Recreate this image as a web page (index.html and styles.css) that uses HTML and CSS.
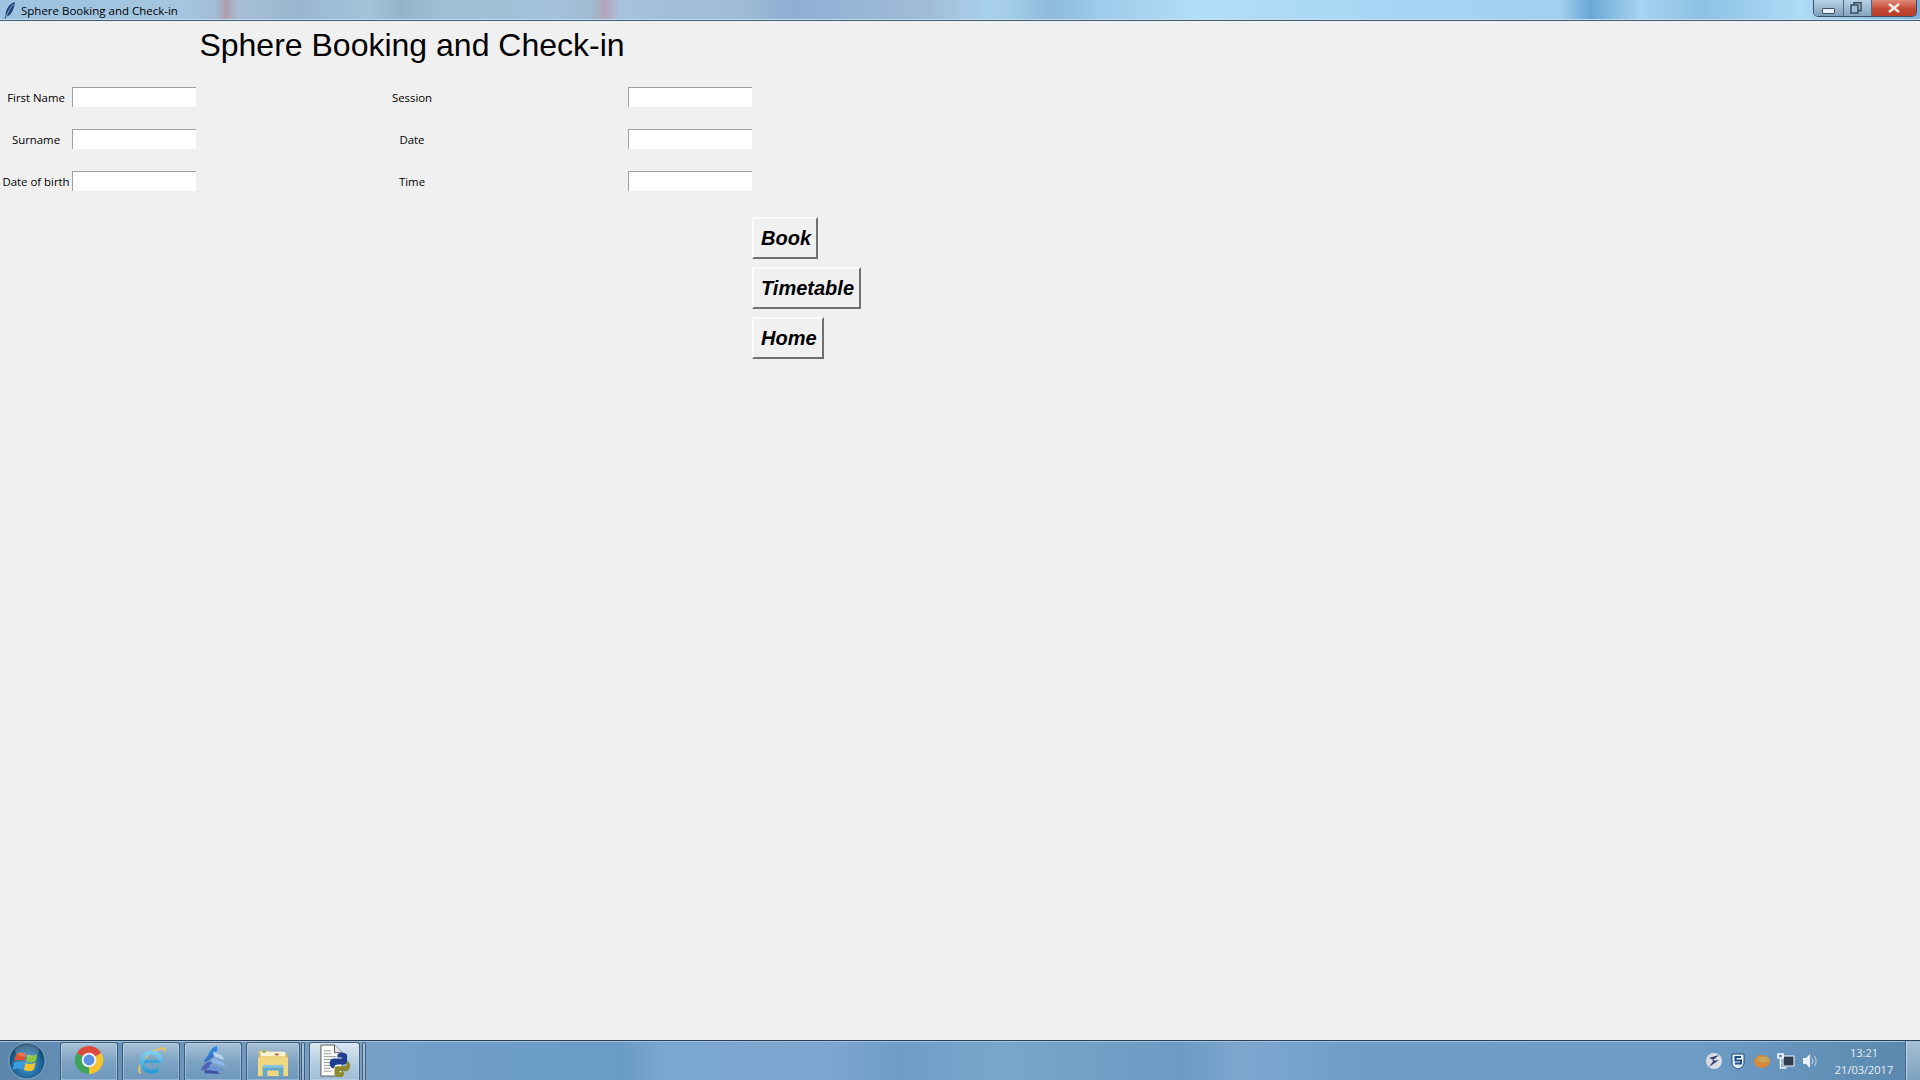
FILE: index.html
```html
<!DOCTYPE html>
<html lang="en">
<head>
<meta charset="utf-8">
<title>Sphere Booking and Check-in</title>
<link rel="stylesheet" href="styles.css">
</head>
<body>
<header class="titlebar">
  <div class="title-left">
    <svg class="feather" viewBox="0 0 14 20" width="14" height="20"><path d="M12 2C8 3 4 7 3 12c-.3 2-.5 3-.5 4l-1 2.500 1 .3 1-2.300c4-1 7-5 8.500-14.500z" fill="#1d3f77"/><path d="M10.500 4C7.500 7.500 5 12 3 17" stroke="#a9c6df" stroke-width=".8" fill="none"/></svg>
    <span class="title-text">Sphere Booking and Check-in</span>
  </div>
  <div class="winctl">
    <div class="wc wc-min"><span class="min-glyph"></span></div>
    <div class="wc wc-max"><svg viewBox="0 0 12 12" width="12" height="12"><rect x="4" y=".7" width="7" height="8" fill="none" stroke="#36465a" stroke-width="1.400"/><rect x="1" y="3" width="7" height="8" fill="#9fc0da" stroke="#36465a" stroke-width="1.400"/></svg></div>
    <div class="wc wc-close"><svg viewBox="0 0 14 10" width="14" height="10"><path d="M2 1l10 8M12 1L2 9" stroke="#f4e8e4" stroke-width="2.600"/></svg></div>
  </div>
</header>

<main class="app">
  <h1 class="heading">Sphere Booking and Check-in</h1>

  <label class="lbl col-a row-a">First Name</label>
  <input class="entry col-b row-a" type="text">
  <label class="lbl col-c row-a">Session</label>
  <input class="entry col-d row-a" type="text">

  <label class="lbl col-a row-b">Surname</label>
  <input class="entry col-b row-b" type="text">
  <label class="lbl col-c row-b">Date</label>
  <input class="entry col-d row-b" type="text">

  <label class="lbl col-a row-c">Date of birth</label>
  <input class="entry col-b row-c" type="text">
  <label class="lbl col-c row-c">Time</label>
  <input class="entry col-d row-c" type="text">

  <button class="tkbtn btn-1" type="button">Book</button>
  <button class="tkbtn btn-2" type="button">Timetable</button>
  <button class="tkbtn btn-3" type="button">Home</button>
</main>

<footer class="taskbar">
  <div class="start">
    <svg viewBox="0 0 40 40" width="40" height="40">
      <defs>
        <radialGradient id="orb" cx=".5" cy=".6" r=".6"><stop offset="0" stop-color="#4fa6d8"/><stop offset=".7" stop-color="#1b5f93"/><stop offset="1" stop-color="#10385c"/></radialGradient>
        <linearGradient id="iee" x1="0" y1="0" x2="0" y2="1"><stop offset="0" stop-color="#7fd0ee"/><stop offset="1" stop-color="#2f9ad6"/></linearGradient>
      </defs>
      <circle cx="20" cy="20" r="18" fill="url(#orb)" stroke="#c5d8e6" stroke-opacity=".55"/>
      <path d="M9 13c3-2 6-2 10 0l-1.500 7c-3-1.500-6-1.500-10 0z" fill="#e2532c"/>
      <path d="M20.500 13.500c3 1.500 6 1.500 10-.5l-1.500 7c-3 2-6 2-10 .5z" fill="#8cc63f"/>
      <path d="M7 21.500c3-1.500 6-1.500 10 0l-1.500 7c-3-1.500-6-1.500-10 .5z" fill="#3a9de0"/>
      <path d="M18.500 22c3 1.500 6 1.500 10-.5l-1.500 7c-3 2-6 2-10 .5z" fill="#f4c430"/>
      <ellipse cx="20" cy="9.500" rx="12" ry="6.500" fill="#fff" fill-opacity=".2"/>
    </svg>
  </div>

  <div class="tb tb-w58">
    <svg viewBox="0 0 32 32" width="30" height="30">
      <path d="M16 16L3 8.500A15 15 0 0 1 29 8.500z" fill="#dc4a3c"/>
      <path d="M16 16L29 8.500A15 15 0 0 1 16 31z" fill="#f6c32c"/>
      <path d="M16 16V31A15 15 0 0 1 3 8.500z" fill="#3fa45b"/>
      <circle cx="16" cy="16" r="7.800" fill="#f2f4f6"/>
      <circle cx="16" cy="16" r="5.800" fill="#5b8fe4"/>
    </svg>
  </div>

  <div class="tb tb-w58">
    <svg viewBox="0 0 34 34" width="31" height="31">
      <path d="M5 31C0 25 10 9 26 4c4-1.300 6.500 0 5.500 3" fill="none" stroke="#e9c35c" stroke-width="2.200"/>
      <path d="M7 18h20" stroke="#3aa4dc" stroke-width="3.500"/>
      <path d="M27.500 18.500A10.500 10.500 0 1 0 24.500 26" fill="none" stroke="url(#iee)" stroke-width="4.500"/>
    </svg>
  </div>

  <div class="tb tb-w58">
    <svg viewBox="0 0 34 34" width="32" height="32">
      <path d="M4 28c3-7 7-10 12-9l-3 6c-3 2-6 3-9 3z" fill="#4a62b5"/>
      <path d="M7 20c3-7 7-12 13-11l-3 6c-3 2-6 4-10 5z" fill="#3d70c6"/>
      <path d="M11 14c2-6 5-11 10-12l1 5c-4 2-7 5-11 7z" fill="#2f86d8"/>
      <path d="M17 8l9 4 3 5-11-4z" fill="#b6d4ee"/>
      <path d="M15 15l13 4 2 5-14-4z" fill="#8db8e6"/>
      <path d="M13 22l12 3 3 4-15-2z" fill="#6d93d8"/>
      <path d="M8 27l14 2 2 3-16-1z" fill="#3e55a8"/>
    </svg>
  </div>

  <div class="tb tb-w53">
    <svg viewBox="0 0 34 34" width="32" height="32">
      <path d="M2 5h11l3 3h16v24H2z" fill="#e5c35c"/>
      <rect x="4" y="6" width="26" height="5" fill="#f8f2d4"/>
      <rect x="6" y="5" width="3" height="2" fill="#6ca84d"/>
      <rect x="19" y="8" width="4" height="2" fill="#c85f3f"/>
      <path d="M1 12h32v20H1z" fill="#f1d77f"/>
      <path d="M6 22h22v10h-5v-6H11v6H6z" fill="#5fa9cf"/>
      <rect x="6" y="20" width="22" height="3" fill="#89c4df"/>
    </svg>
  </div>

  <div class="tb tb-sliver"></div>

  <div class="tb tb-active">
    <svg viewBox="0 0 34 36" width="33" height="35">
      <path d="M3 1h14l8 8v24H3z" fill="#fbfbfb" stroke="#555" stroke-width="1"/>
      <path d="M17 1v8h8" fill="#dfe3e8" stroke="#555" stroke-width="1"/>
      <path d="M6 7h8M6 10h8M6 13h13M6 16h9M6 19h9M6 22h8M6 25h7M6 28h7" stroke="#9a9a9a" stroke-width="1"/>
      <path d="M16 25c-2 0-4-2-4-5s2-5 4-5h9v-1h-5v-2c0-2 2-3 5-3s5 1 5 3v6c0 2-1 3-3 3h-6c-3 0-4 1-4 3z" fill="#1f3f8f"/>
      <path d="M30 18c2 0 3 2 3 5s-2 5-4 5h-7v1h5v2c0 2-2 3-5 3s-5-1-5-3v-5c0-2 1-3 3-3h6c3 0 4-2 4-5z" fill="#8c8a2d"/>
    </svg>
  </div>

  <div class="tb tb-sliver"></div>

  <div class="tray">
    <svg class="tray-icon" viewBox="0 0 18 18" width="18" height="18"><circle cx="9" cy="9" r="8" fill="#d8dde4"/><path d="M4 6l10-3-7 6 7-1-10 7 5-7z" fill="#2f3b73"/></svg>
    <svg class="tray-icon" viewBox="0 0 18 18" width="18" height="18"><path d="M3 2h12v9c0 3-3 5-6 6-3-1-6-3-6-6z" fill="#e9f0f6" stroke="#1f4f86"/><path d="M12 5H6.500v3.500H12v3H6" fill="none" stroke="#1f4f86" stroke-width="2"/></svg>
    <svg class="tray-icon" viewBox="0 0 18 18" width="18" height="18"><ellipse cx="9" cy="9.500" rx="8" ry="6.500" fill="#d7893c"/><ellipse cx="10" cy="7.500" rx="6" ry="3" fill="#c9a55b"/></svg>
    <svg class="tray-icon" viewBox="0 0 18 18" width="18" height="18"><path d="M6 4h11v10H6z" fill="#2d3f4f" stroke="#f4f7fa"/><path d="M1 2h5v4H1zM3.500 6v10h6" fill="none" stroke="#f4f7fa" stroke-width="1.600"/></svg>
    <svg class="tray-icon" viewBox="0 0 18 18" width="18" height="18"><path d="M2 6h3l4-4v14l-4-4H2z" fill="#e8eef4"/><path d="M11 6c1 2 1 4 0 6M13.500 4c2 3 2 7 0 10" stroke="#c7d8e6" fill="none"/></svg>
  </div>
  <div class="clock"><span>13:21</span><span>21/03/2017</span></div>
  <div class="show-desktop"></div>
</footer>
</body>
</html>
```
FILE: styles.css
```css
html, body { margin: 0; height: 100%; }
body {
  display: flex;
  flex-direction: column;
  height: 1080px;
  overflow: hidden;
  background: #f0f0f0;
  font-family: "Open Sans", "Noto Sans", sans-serif;
  color: #000;
}

/* title bar */
.titlebar {
  height: 20px;
  flex: none;
  display: flex;
  justify-content: space-between;
  border-bottom: 1px solid #3d5d78;
  box-shadow: inset 0 -1px 0 #c8dcea;
  background:
    linear-gradient(90deg,
      #9cc3e0 0, #a4c6e0 180px, #a2bed8 215px, #ad9fae 226px, #a8bed6 238px, #98b6d0 300px, #a4c4dc 370px,
      #93b3ca 400px, #9ec0d6 440px, #a4c2dc 560px, #9fbad2 590px, #b3a7b8 605px, #a6c2de 620px,
      #9fbcd6 740px, #8dafd3 790px, #a0bdd7 930px, #a9d1ee 990px, #a4cde8 1010px,
      #8fbadb 1050px, #9ecbe9 1100px, #b4def8 1200px, #a6d5f3 1400px, #a2d0ef 1560px,
      #6ba7d6 1590px, #a6d4f1 1640px, #8dc1e4 1700px, #aedbf6 1800px, #7fb1d8 1920px);
}
.title-left { display: flex; align-items: center; height: 20px; padding-left: 3px; gap: 4px; }
.feather { flex: none; }
.title-text { font-size: 11.500px; color: #000; white-space: nowrap; }
.winctl {
  display: flex;
  height: 17px;
  margin-right: 3px;
  border: 1px solid #3d5268;
  border-top: 0;
  border-radius: 0 0 5px 5px;
  overflow: hidden;
  box-sizing: border-box;
  width: 104px;
}
.wc { display: flex; align-items: center; justify-content: center; }
.wc-min { width: 29px; background: linear-gradient(#b9d2e4, #7d9eb9); border-right: 1px solid #4f6a80; }
.wc-max { width: 28px; padding-right: 4px; box-sizing: border-box; background: linear-gradient(#b5d0e3, #86a6c0); border-right: 1px solid #4f6a80; }
.wc-close { flex: 1; background: linear-gradient(#df8a78, #c24a34 55%, #b83c28); }
.min-glyph { width: 11px; height: 4px; margin-top: 5px; background: #e8eff5; border: 1px solid #3d5268; border-radius: 1px; }

/* application grid */
.app {
  flex: 1;
  display: grid;
  grid-template-columns: 72px 124px 432px 124px 1fr;
  grid-template-rows: 55px 42px 42px 42px 11px 50px 50px 50px 1fr;
  align-items: center;
  justify-items: center;
}
.col-a { grid-column: 1; }
.col-b { grid-column: 2; }
.col-c { grid-column: 3; }
.col-d { grid-column: 4; }
.row-a { grid-row: 2; }
.row-b { grid-row: 3; }
.row-c { grid-row: 4; }
.heading {
  grid-column: 3;
  grid-row: 1;
  margin: 0;
  font: 400 32px/37px "Liberation Sans", Arial, sans-serif;
  white-space: nowrap;
  align-self: start;
  margin-top: 6px;
}
.lbl { font-size: 11.400px; line-height: 16px; padding-top: 2px; white-space: nowrap; }
.entry {
  box-sizing: border-box;
  width: 124px;
  height: 20px;
  margin: 0;
  padding: 0;
  border: 0;
  border-top: 1px solid #a0a0a0;
  border-left: 1px solid #a0a0a0;
  background: #fff;
  outline: 0;
}
.tkbtn {
  grid-column: 5;
  justify-self: start;
  height: 42px;
  padding: 0 5px 1px 7px;
  box-sizing: border-box;
  background: #f0f0f0;
  border: 2px solid;
  border-color: #fbfbfb #6f6f6f #6f6f6f #fbfbfb;
  font: italic 700 20px/1 "Liberation Sans", Arial, sans-serif;
  color: #000;
}
.btn-1 { grid-row: 6; }
.btn-2 { grid-row: 7; }
.btn-3 { grid-row: 8; }

/* task bar */
.taskbar {
  height: 40px;
  flex: none;
  box-sizing: border-box;
  display: flex;
  align-items: stretch;
  border-top: 1px solid #28405c;
  box-shadow: inset 0 1px 0 #a7c2d8;
  background:
    linear-gradient(90deg,
      #5d86ad 0, #648db5 60px, #7aa0c4 360px, #6f9ecb 440px, #6a9ac6 620px, #7aa6cf 660px, #7fa6d0 820px,
      #6f9dc8 900px, #7aa5cc 1000px, #6c9ac2 1180px, #7ea7d0 1240px, #6f9dc6 1360px, #6d9cc5 1700px, #5b88ae 1905px);
}
.start { width: 54px; margin-right: 6px; display: flex; align-items: center; justify-content: center; }
.tb {
  box-sizing: border-box;
  margin: 1px 4px 0 0;
  padding-bottom: 3px;
  display: flex;
  align-items: center;
  justify-content: center;
  border: 1px solid #3f5e7c;
  border-bottom: 0;
  border-radius: 3px 3px 0 0;
  box-shadow: inset 0 0 0 1px rgba(220, 235, 245, .35);
  background: linear-gradient(#a9c2d6, #7ea3c3 50%, #6d97bd);
}
.tb-w58 { width: 58px; }
.tb-w53 { width: 54px; margin-right: 1px; padding-bottom: 0; }
.tb-sliver { width: 4px; margin-right: 4px; background: linear-gradient(#8fb0cb, #6d97bd); }
.tb-active { width: 51px; margin-right: 2px; padding-bottom: 1px; background: linear-gradient(#dbe8f2, #b7cfe1 50%, #9dbdd6); }
.tb-active + .tb-sliver { margin-right: 0; }
.tray {
  margin-left: auto;
  display: flex;
  align-items: center;
  gap: 6px;
  margin-top: 1px;
}
.tray-icon { flex: none; }
.clock {
  width: 80px;
  margin-left: 5px;
  margin-right: 1px;
  padding-top: 2px;
  display: flex;
  flex-direction: column;
  align-items: center;
  justify-content: center;
  gap: 1px;
  font-size: 11px;
  line-height: 16px;
  color: #e6eff6;
}
.show-desktop {
  width: 14px;
  border-left: 1px solid #47688a;
  box-shadow: inset 1px 0 0 rgba(230, 240, 248, .5);
  background: linear-gradient(#a6bfd3, #7da1c1);
}
```
